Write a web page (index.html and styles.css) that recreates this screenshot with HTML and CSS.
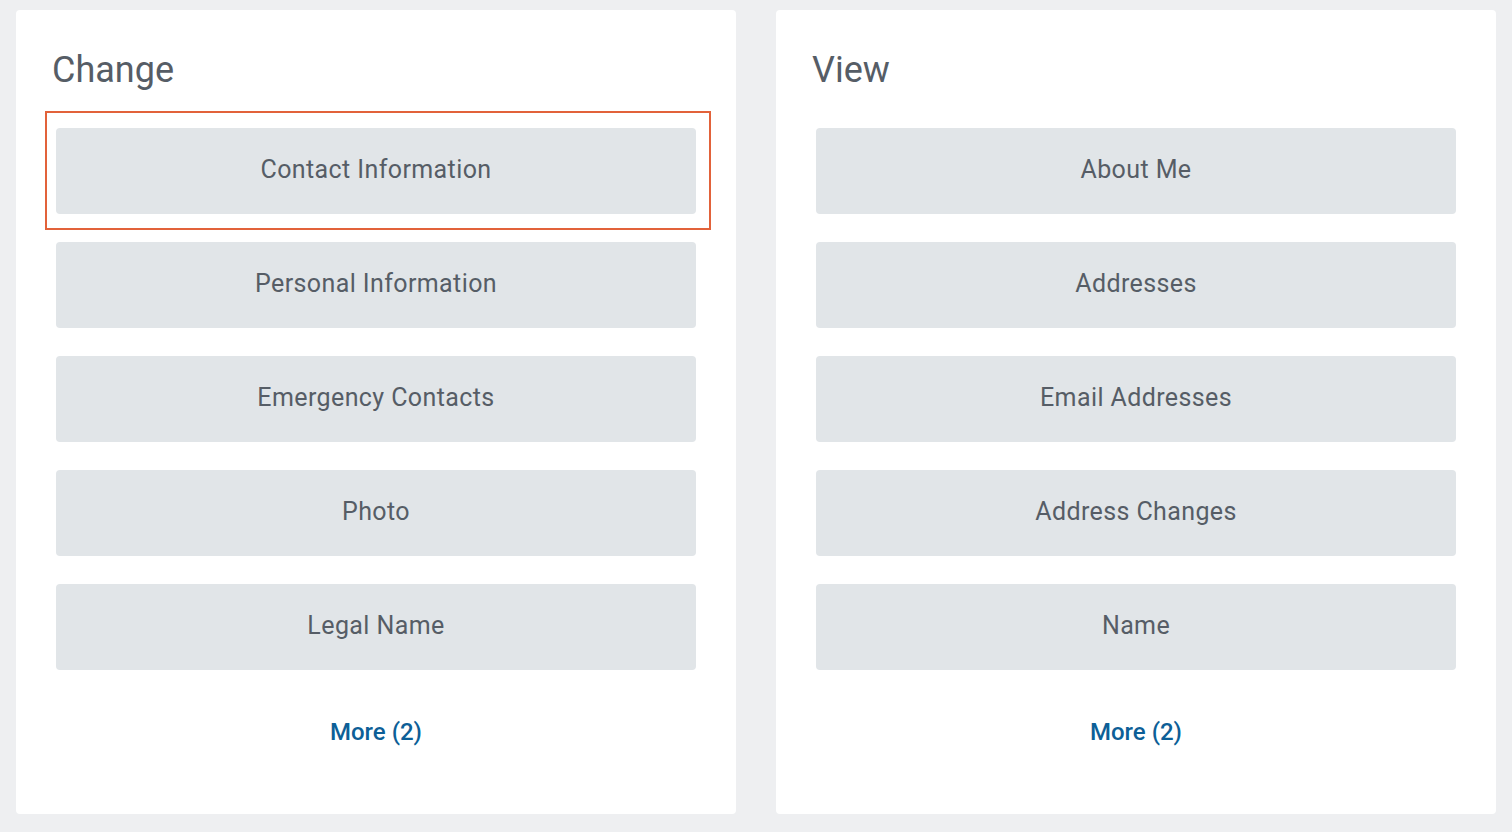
FILE: index.html
```html
<!DOCTYPE html>
<html lang="en">
<head>
<meta charset="utf-8">
<title>Change / View</title>
<link rel="stylesheet" href="styles.css">
</head>
<body>
<main class="page">
  <section class="card">
    <h2 class="card-title">Change</h2>
    <div class="actions">
      <button class="action highlighted">Contact Information</button>
      <button class="action">Personal Information</button>
      <button class="action">Emergency Contacts</button>
      <button class="action">Photo</button>
      <button class="action">Legal Name</button>
    </div>
    <a class="more" href="#">More (2)</a>
  </section>
  <section class="card">
    <h2 class="card-title">View</h2>
    <div class="actions">
      <button class="action">About Me</button>
      <button class="action">Addresses</button>
      <button class="action">Email Addresses</button>
      <button class="action">Address Changes</button>
      <button class="action">Name</button>
    </div>
    <a class="more" href="#">More (2)</a>
  </section>
</main>
</body>
</html>
```

FILE: styles.css
```css
* { box-sizing: border-box; }
html, body {
  margin: 0;
  height: 100%;
}
body {
  background: #eeeff1;
  font-family: Roboto, "Liberation Sans", Arial, sans-serif;
  overflow: hidden;
}
.page {
  display: flex;
  gap: 40px;
  padding: 10px 16px 0 16px;
}
.card {
  width: 720px;
  height: 804px;
  background: #ffffff;
  border-radius: 4px;
  display: flex;
  flex-direction: column;
}
.card-title {
  margin: 0;
  padding: 38px 0 0 36px;
  height: 118px;
  font-size: 36px;
  line-height: 44px;
  font-weight: 400;
  color: #565d66;
}
.actions {
  display: flex;
  flex-direction: column;
  gap: 28px;
  padding: 0 40px;
}
.action {
  position: relative;
  height: 86px;
  width: 100%;
  border: none;
  border-radius: 4px;
  background: #e1e5e8;
  color: #565d66;
  font-family: inherit;
  font-size: 25px;
  font-weight: 400;
  letter-spacing: 0.4px;
  padding: 0 0 4px 0;
  cursor: pointer;
}
.action.highlighted::after {
  content: "";
  position: absolute;
  top: -17px;
  left: -11px;
  right: -15px;
  bottom: -16px;
  border: 2px solid #e2623a;
  pointer-events: none;
}
.more {
  align-self: center;
  margin-top: 47px;
  font-size: 24px;
  line-height: 30px;
  font-weight: 500;
  color: #0d5f97;
  text-decoration: none;
}
```
